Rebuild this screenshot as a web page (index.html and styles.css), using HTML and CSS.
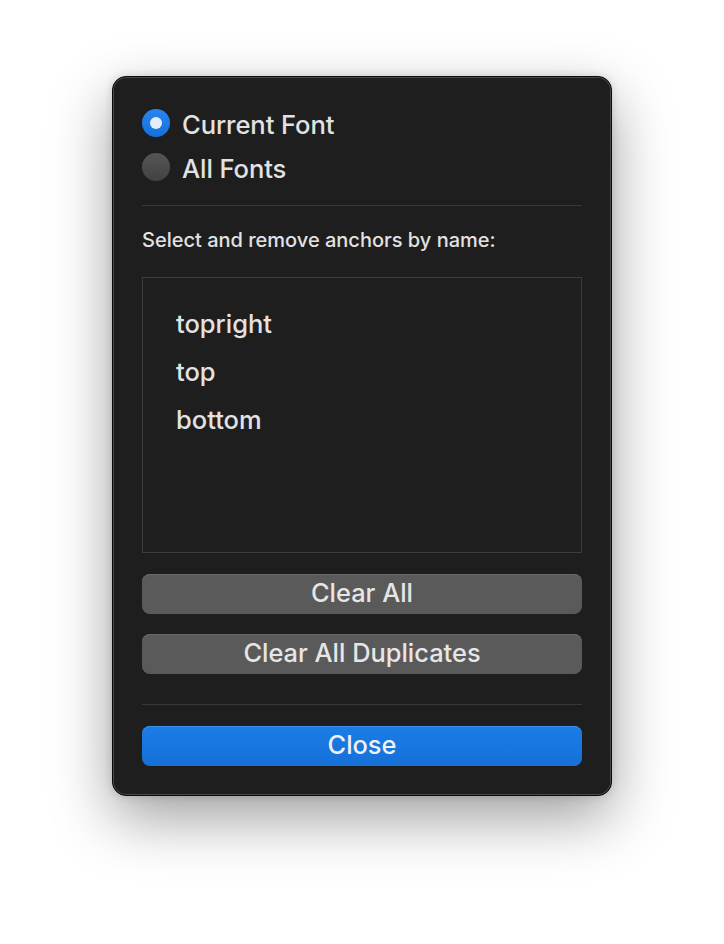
FILE: index.html
```html
<!DOCTYPE html>
<html>
<head>
<meta charset="utf-8">
<link rel="stylesheet" href="styles.css">
</head>
<body>
<div class="window">
  <div class="radios">
    <div class="radio-row"><span class="radio on"><span class="dot"></span></span><span class="radio-label">Current Font</span></div>
    <div class="radio-row"><span class="radio off"></span><span class="radio-label">All Fonts</span></div>
  </div>
  <div class="divider first"></div>
  <div class="label">Select and remove anchors by name:</div>
  <div class="listbox">
    <div class="item">topright</div>
    <div class="item">top</div>
    <div class="item">bottom</div>
  </div>
  <div class="btn gray b1">Clear All</div>
  <div class="btn gray b2">Clear All Duplicates</div>
  <div class="divider second"></div>
  <div class="btn blue">Close</div>
</div>
</body>
</html>
```
FILE: styles.css
```css
html, body {
  margin: 0;
  padding: 0;
  background: #ffffff;
}
body {
  padding-top: 76px;
  height: 944px;
  box-sizing: border-box;
  font-family: Inter, "Noto Sans", sans-serif;
  color: #e2e2e2;
}
.window {
  width: 500px;
  height: 720px;
  margin: 0 auto;
  box-sizing: border-box;
  background: #1e1e1e;
  border: 1px solid #0a0a0a;
  border-radius: 14px;
  box-shadow: inset 0 0 0 1px #4a4a4a, 0 22px 60px rgba(0,0,0,0.38), 0 0 10px rgba(0,0,0,0.14);
  padding: 24px 29px 29px 29px;
  display: flex;
  flex-direction: column;
}
.radios {
  display: flex;
  flex-direction: column;
}
.radio-row {
  height: 44px;
  display: flex;
  align-items: center;
}
.radio {
  width: 28px;
  height: 28px;
  border-radius: 50%;
  box-sizing: border-box;
  display: flex;
  align-items: center;
  justify-content: center;
  flex: none;
}
.radio.on {
  background: linear-gradient(#2a86ee, #1570dc);
}
.radio.on .dot {
  width: 12px;
  height: 12px;
  border-radius: 50%;
  background: #e2eefc;
}
.radio.off {
  background: linear-gradient(#555555, #424242);
}
.radio-label {
  margin-left: 12px;
  padding-top: 3px;
  font-size: 25.6px;
  font-weight: 450;
  letter-spacing: -0.1px;
}
.divider {
  height: 1px;
  background: #383838;
}
.divider.first { margin-top: 16px; }
.divider.second { margin-top: 30px; }
.label {
  margin-top: 20px;
  height: 28px;
  line-height: 28px;
  font-size: 20px;
  font-weight: 500;
  letter-spacing: 0px;
}
.listbox {
  margin-top: 23px;
  height: 276px;
  box-sizing: border-box;
  border: 1px solid #3c3c3c;
  padding: 22px 0 0 33px;
  background: #1e1e1e;
}
.item {
  height: 48px;
  line-height: 48px;
  font-size: 25.5px;
  font-weight: 450;
}
.btn {
  height: 40px;
  border-radius: 8px;
  display: flex;
  align-items: center;
  justify-content: center;
  padding-bottom: 3px;
  font-size: 25.4px;
  font-weight: 450;
  color: #e6e6e6;
  box-sizing: border-box;
}
.btn.gray {
  background: #5a5a5a;
  box-shadow: inset 0 1px 0 #6a6a6a;
}
.b1 { margin-top: 21px; }
.b2 { margin-top: 20px; }
.btn.blue {
  margin-top: 21px;
  background: linear-gradient(#1a7de6, #1670d8);
  box-shadow: inset 0 1px 0 #3a8fec;
  color: #f0f0f0;
}
```
